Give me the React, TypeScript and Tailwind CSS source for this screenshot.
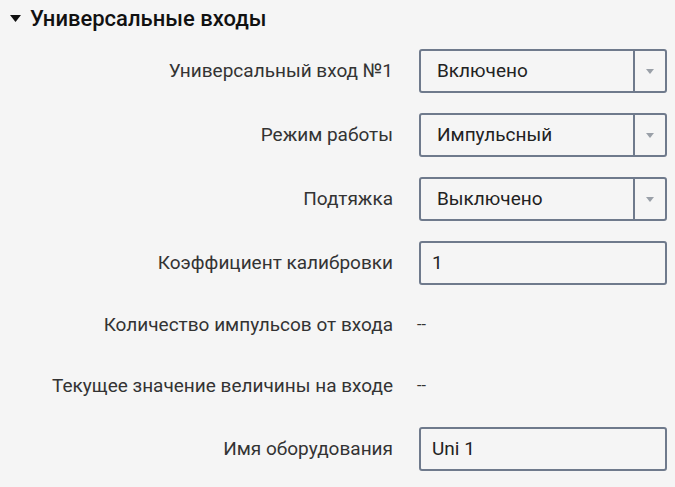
import React from "react";

function Caret() {
  return (
    <svg width="8" height="5" viewBox="0 0 8 5" className="block">
      <path d="M0 0 L8 0 L4 5 Z" fill="#9aa0a8" />
    </svg>
  );
}

function Select({ value }: { value: string }) {
  return (
    <div className="flex h-[44px] w-[248px] items-stretch rounded-[3px] border-2 border-[#6f7a8c] bg-[#f5f5f5]">
      <div className="flex flex-1 items-center pl-[16px] text-[19px] text-[#222]">{value}</div>
      <div className="flex w-[32px] items-center justify-center border-l-2 border-[#6f7a8c]">
        <Caret />
      </div>
    </div>
  );
}

function Input({ value }: { value: string }) {
  return (
    <div className="flex h-[44px] w-[248px] items-center rounded-[3px] border-2 border-[#6f7a8c] bg-[#f5f5f5] pl-[11px] text-[19px] text-[#222]">
      {value}
    </div>
  );
}

function Row({ label, children, h = "h-[64px]" }: { label: string; children: React.ReactNode; h?: string }) {
  return (
    <div className={`flex items-center ${h}`}>
      <div className="w-[393px] whitespace-nowrap text-right text-[19px] text-[#333]">{label}</div>
      <div className="ml-[26px] flex items-center">{children}</div>
    </div>
  );
}

export default function App() {
  return (
    <div
      className="h-[487px] w-[675px] overflow-hidden bg-[#f5f5f5]"
      style={{ fontFamily: "Roboto, 'Liberation Sans', sans-serif" }}
    >
      <div className="flex h-[36px] items-center pl-[10px]">
        <svg width="11" height="7" viewBox="0 0 11 7" className="mr-[9px]">
          <path d="M0 0 L11 0 L5.5 7 Z" fill="#111" />
        </svg>
        <span className="text-[22px] font-medium text-[#111]">Универсальные входы</span>
      </div>
      <div className="pt-[3px]">
        <Row label="Универсальный вход №1">
          <Select value="Включено" />
        </Row>
        <Row label="Режим работы">
          <Select value="Импульсный" />
        </Row>
        <Row label="Подтяжка">
          <Select value="Выключено" />
        </Row>
        <Row label="Коэффициент калибровки">
          <Input value="1" />
        </Row>
        <Row label="Количество импульсов от входа" h="h-[60px]">
          <span className="-ml-[2px] text-[16px] text-[#333]">--</span>
        </Row>
        <Row label="Текущее значение величины на входе" h="h-[62px]">
          <span className="-ml-[2px] text-[16px] text-[#333]">--</span>
        </Row>
        <Row label="Имя оборудования">
          <Input value="Uni 1" />
        </Row>
      </div>
    </div>
  );
}
